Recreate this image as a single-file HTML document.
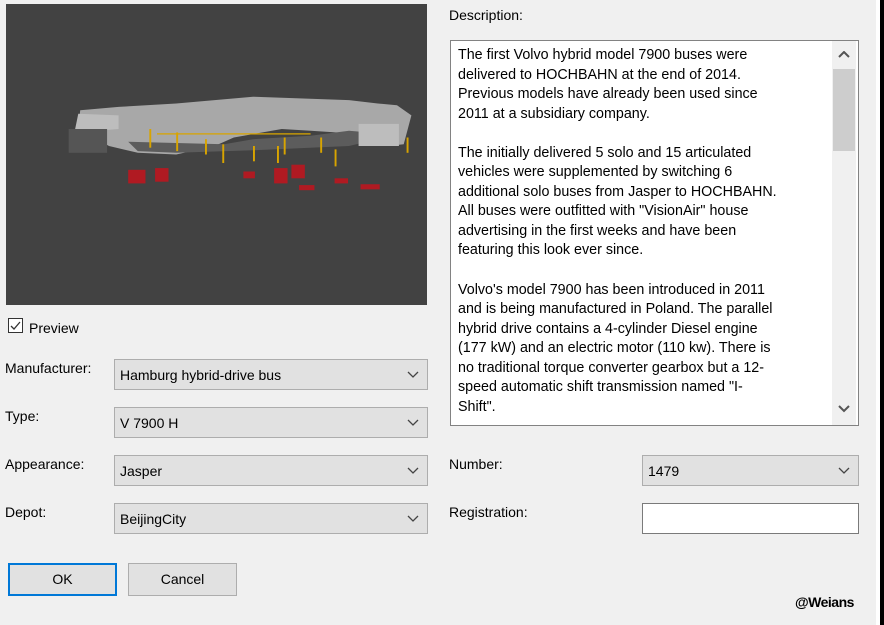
<!DOCTYPE html>
<html><head><style>
body{margin:0;width:884px;height:625px;background:#f0f0f0;position:relative;overflow:hidden;font-family:"Liberation Sans",sans-serif;font-size:14px;color:#000}
.a{position:absolute}
.combo{position:absolute;height:29px;background:#e1e1e1;border:1px solid #adadad;box-sizing:content-box}
.combo span{position:absolute;left:5px;top:7px}
.combo svg{position:absolute;right:8px;top:11px}
.lbl{position:absolute}
.btn{position:absolute;height:31px;background:#e1e1e1;border:1px solid #adadad;text-align:center;line-height:31px}
</style></head><body>
<div class="a" style="left:6px;top:4px;width:421px;height:301px;background:#424242">
<svg width="421" height="301" viewBox="0 0 421 301">
<g transform="translate(55,40) scale(0.96,0.85)">
<polygon points="18,100 20,78 60,74 120,70 200,62 300,66 330,70 350,72 365,84 357,118 340,120 320,110 300,105 260,102 230,100 210,104 180,110 160,120 120,130 80,128 50,120" fill="#a8a8a8"/>
<polygon points="14,104 60,100 60,84 18,82" fill="#bdbdbd"/>
<polygon points="70,115 170,118 200,112 260,108 300,102 320,104 330,112 300,120 200,125 120,128 80,126" fill="#5c5c5c"/>
<rect x="8" y="100" width="40" height="28" fill="#555"/>
<rect x="310" y="94" width="42" height="26" fill="#bdbdbd"/>
<g fill="#d8a400"><rect x="92" y="100" width="2" height="22"/><rect x="120" y="104" width="2" height="22"/><rect x="150" y="112" width="2" height="18"/><rect x="168" y="118" width="2" height="22"/><rect x="200" y="120" width="2" height="18"/><rect x="225" y="120" width="2" height="20"/><rect x="232" y="110" width="2" height="20"/><rect x="270" y="110" width="2" height="18"/><rect x="285" y="124" width="2" height="20"/><rect x="360" y="110" width="2" height="18"/><rect x="100" y="105" width="160" height="1.5"/></g>
<g fill="#b01a22"><rect x="70" y="148" width="18" height="16"/><rect x="98" y="146" width="14" height="16"/><rect x="190" y="150" width="12" height="8"/><rect x="222" y="146" width="14" height="18"/><rect x="240" y="142" width="14" height="16"/><rect x="248" y="166" width="16" height="6"/><rect x="285" y="158" width="14" height="6"/><rect x="312" y="165" width="20" height="6"/></g>
</g>
</svg></div>
<div class="a" style="left:8px;top:318px;width:13px;height:13px;border:1px solid #333;background:#fff"><svg width="13" height="13"><path d="M2 7 L5 10 L11 3" stroke="#333" stroke-width="1.3" fill="none"/></svg></div>
<div class="lbl" style="left:29px;top:320px">Preview</div>
<div class="lbl" style="left:5px;top:360px">Manufacturer:</div>
<div class="lbl" style="left:5px;top:408px">Type:</div>
<div class="lbl" style="left:5px;top:456px">Appearance:</div>
<div class="lbl" style="left:5px;top:504px">Depot:</div>
<div class="combo" style="left:114px;top:359px;width:312px"><span>Hamburg hybrid-drive bus</span><svg width="12" height="8"><path d="M1 1 L6 6 L11 1" stroke="#444" fill="none" stroke-width="1.3"/></svg></div>
<div class="combo" style="left:114px;top:407px;width:312px"><span>V 7900 H</span><svg width="12" height="8"><path d="M1 1 L6 6 L11 1" stroke="#444" fill="none" stroke-width="1.3"/></svg></div>
<div class="combo" style="left:114px;top:455px;width:312px"><span>Jasper</span><svg width="12" height="8"><path d="M1 1 L6 6 L11 1" stroke="#444" fill="none" stroke-width="1.3"/></svg></div>
<div class="combo" style="left:114px;top:503px;width:312px"><span>BeijingCity</span><svg width="12" height="8"><path d="M1 1 L6 6 L11 1" stroke="#444" fill="none" stroke-width="1.3"/></svg></div>
<div class="btn" style="left:8px;top:563px;width:105px;border:2px solid #0078d7;height:29px;line-height:29px">OK</div>
<div class="btn" style="left:128px;top:563px;width:107px">Cancel</div>
<div class="lbl" style="left:449px;top:7px">Description:</div>
<div class="a" style="left:450px;top:40px;width:407px;height:384px;border:1px solid #828282;background:#fff">
<div class="a" style="left:7px;top:5px;width:372px;line-height:19.55px;white-space:nowrap;font-size:14.3px">The first Volvo hybrid model 7900 buses were<br>delivered to HOCHBAHN at the end of 2014.<br>Previous models have already been used since<br>2011 at a subsidiary company.<br><br>The initially delivered 5 solo and 15 articulated<br>vehicles were supplemented by switching 6<br>additional solo buses from Jasper to HOCHBAHN.<br>All buses were outfitted with "VisionAir" house<br>advertising in the first weeks and have been<br>featuring this look ever since.<br><br>Volvo's model 7900 has been introduced in 2011<br>and is being manufactured in Poland. The parallel<br>hybrid drive contains a 4-cylinder Diesel engine<br>(177 kW) and an electric motor (110 kw). There is<br>no traditional torque converter gearbox but a 12-<br>speed automatic shift transmission named "I-<br>Shift".</div>
<div class="a" style="left:381px;top:0;width:24px;height:384px;background:#f0f0f0">
<div class="a" style="left:1px;top:28px;width:22px;height:82px;background:#cdcdcd"></div>
<svg class="a" style="left:6px;top:10px" width="12" height="8"><path d="M1 6 L6 1 L11 6" stroke="#555" fill="none" stroke-width="2"/></svg>
<svg class="a" style="left:6px;top:364px" width="12" height="8"><path d="M1 1 L6 6 L11 1" stroke="#555" fill="none" stroke-width="2"/></svg>
</div></div>
<div class="lbl" style="left:449px;top:456px">Number:</div>
<div class="lbl" style="left:449px;top:504px">Registration:</div>
<div class="combo" style="left:642px;top:455px;width:215px"><span>1479</span><svg width="12" height="8"><path d="M1 1 L6 6 L11 1" stroke="#444" fill="none" stroke-width="1.3"/></svg></div>
<div class="a" style="left:642px;top:503px;width:215px;height:29px;background:#fff;border:1px solid #7a7a7a"></div>
<div class="a" style="left:795px;top:594px;font-size:14px;font-weight:bold;letter-spacing:-0.5px">@Weians</div>
<div class="a" style="left:876px;top:0;width:4px;height:625px;background:#fff"></div>
<div class="a" style="left:880px;top:0;width:4px;height:625px;background:#000"></div>
</body></html>
